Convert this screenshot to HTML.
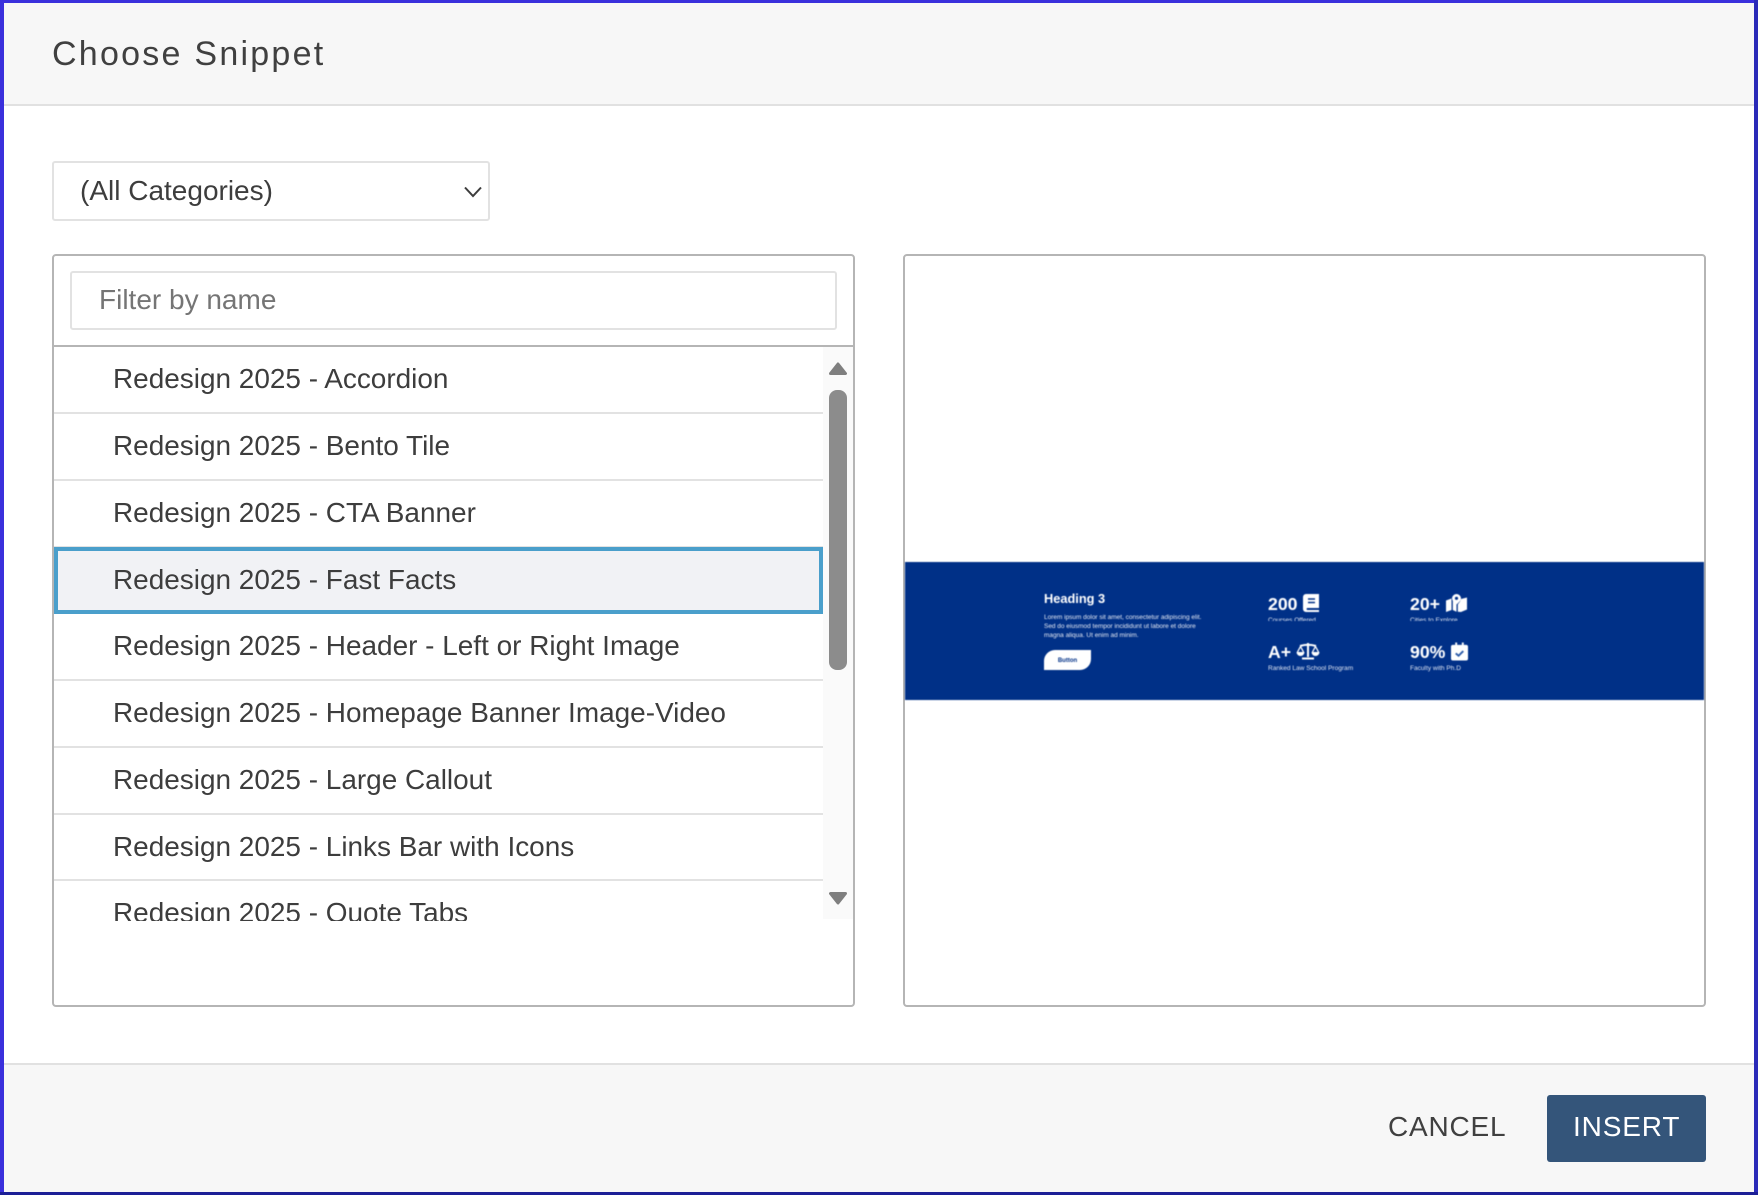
<!DOCTYPE html>
<html>
<head>
<meta charset="utf-8">
<style>
html,body{margin:0;padding:0;background:#fff}
#p{position:relative;width:1758px;height:1195px;overflow:hidden;background:#fff;font-family:"Liberation Sans",Arial,sans-serif;color:#3d3d3d}
#p div,#p span.a{position:absolute;box-sizing:border-box}
.t{white-space:nowrap}
.row{left:54px;width:769px;height:67px;line-height:64px;padding-left:59px;font-size:27.95px;border-bottom:2px solid #e2e2e2;white-space:nowrap}
.s{color:#fff;white-space:nowrap}
.b{font-weight:700;font-size:17.7px;line-height:20px}
.m{font-size:6.55px;line-height:10px;color:#dfe6f3}
</style>
</head>
<body>
<div id="p">
  <div style="left:0;top:0;width:1758px;height:106px;background:#f7f7f7;border-bottom:2px solid #e1e1e1"></div>
  <div class="t" style="left:52px;top:33px;font-size:34px;line-height:42px;letter-spacing:2.25px;color:#404040">Choose Snippet</div>

  <div style="left:52px;top:161px;width:438px;height:60px;border:2px solid #e2e2e2;border-radius:3px;background:#fff"></div>
  <div class="t" style="left:80px;top:174px;font-size:28px;line-height:34px">(All Categories)</div>
  <svg style="position:absolute;left:463px;top:185px" width="20" height="14" viewBox="0 0 20 14"><path d="M2 2.500 L10 11 L18 2.500" fill="none" stroke="#3d3d3d" stroke-width="2"/></svg>

  <!-- left panel -->
  <div style="left:52px;top:254px;width:803px;height:753px;border:2px solid #b5b5b5;border-radius:4px;background:#fff"></div>
  <div style="left:70px;top:271px;width:767px;height:59px;border:2px solid #e2e2e2;border-radius:3px;background:#fff"></div>
  <div class="t" style="left:99px;top:283px;font-size:28px;line-height:34px;color:#757575">Filter by name</div>
  <div style="left:54px;top:345px;width:799px;height:2px;background:#b5b5b5"></div>

  <div style="left:54px;top:347px;width:799px;height:574px;overflow:hidden">
    <div style="left:0;top:0;width:799px;height:574px">
      <div class="row" style="left:0;top:0">Redesign 2025 - Accordion</div>
      <div class="row" style="left:0;top:66.8px">Redesign 2025 - Bento Tile</div>
      <div class="row" style="left:0;top:133.6px">Redesign 2025 - CTA Banner</div>
      <div class="row" style="left:0;top:200px;border:4px solid #4a9fcb;background:#f1f2f5;padding-left:55px;line-height:58px;height:67px">Redesign 2025 - Fast Facts</div>
      <div class="row" style="left:0;top:267.2px">Redesign 2025 - Header - Left or Right Image</div>
      <div class="row" style="left:0;top:334px">Redesign 2025 - Homepage Banner Image-Video</div>
      <div class="row" style="left:0;top:400.8px">Redesign 2025 - Large Callout</div>
      <div class="row" style="left:0;top:467.6px;height:66px;line-height:63px">Redesign 2025 - Links Bar with Icons</div>
      <div class="row" style="left:0;top:533.6px">Redesign 2025 - Quote Tabs</div>
    </div>
    <div style="left:769px;top:0;width:30px;height:572px;background:#fafafa"></div>
    <svg style="position:absolute;left:775px;top:14px" width="18" height="15" viewBox="0 0 18 15"><path d="M9 3 L16.500 12.500 L1.500 12.500 Z" fill="#7f7f7f" stroke="#7f7f7f" stroke-width="3" stroke-linejoin="round"/></svg>
    <div style="left:775px;top:43px;width:18px;height:280px;background:#8c8c8c;border-radius:8px"></div>
    <svg style="position:absolute;left:775px;top:544px" width="18" height="15" viewBox="0 0 18 15"><path d="M1.500 2.500 L16.500 2.500 L9 12 Z" fill="#7f7f7f" stroke="#7f7f7f" stroke-width="3" stroke-linejoin="round"/></svg>
  </div>

  <!-- right panel -->
  <div style="left:903px;top:254px;width:803px;height:753px;border:2px solid #b5b5b5;border-radius:4px;background:#fff"></div>
  <div style="left:905px;top:562px;width:799px;height:138px;background:#003087;overflow:hidden;filter:blur(.45px)">
    <div class="s" style="left:139px;top:29px;font-weight:700;font-size:12.8px;line-height:16px">Heading 3</div>
    <div class="s" style="left:139px;top:50.500px;font-size:6.47px;line-height:9.4px;color:#e6ebf5">Lorem ipsum dolor sit amet, consectetur adipiscing elit.<br>Sed do eiusmod tempor incididunt ut labore et dolore<br>magna aliqua. Ut enim ad minim.</div>
    <div style="left:139px;top:88px;width:47px;height:20px;background:#fff;border-radius:11px 0 11px 0"></div>
    <div class="t" style="left:139px;top:89px;width:47px;height:20px;line-height:20px;text-align:center;font-size:6px;font-weight:700;color:#003087">Button</div>

    <div class="s b" style="left:363px;top:32px">200</div>
    <svg style="position:absolute;left:398px;top:32px" width="17" height="18" viewBox="0 0 17 18"><path d="M3 0H16V14H4a1.500 1.500 0 0 0 0 2H16V18H3A3 3 0 0 1 0 15V3A3 3 0 0 1 3 0Z" fill="#fff"/><path d="M5 5H12M5 8.500H12" stroke="#003087" stroke-width="1.400"/></svg>
    <div style="left:363px;top:50px;width:120px;height:9px;overflow:hidden"><div class="s m" style="left:0;top:3.600px">Courses Offered</div></div>

    <div class="s b" style="left:505px;top:32px">20+</div>
    <svg style="position:absolute;left:541px;top:32px" width="21" height="18" viewBox="0 0 21 18"><path d="M0 6.500L5.500 4.500V16L0 18ZM6.800 4.800L8 7.500L10.500 10.500V17.800L6.800 16ZM11.800 10.500L14 7.500L15 5L21 3.500V15.500L15 18L11.800 17.800Z" fill="#fff"/><path d="M10.500 0A4.500 4.500 0 0 1 15 4.500C15 6.500 12.500 8.800 10.500 10.500C8.500 8.800 6 6.500 6 4.500A4.500 4.500 0 0 1 10.500 0Z" fill="#fff"/><circle cx="10.500" cy="4.300" r="1.600" fill="#003087"/></svg>
    <div style="left:505px;top:50px;width:120px;height:9px;overflow:hidden"><div class="s m" style="left:0;top:3.600px">Cities to Explore</div></div>

    <div class="s b" style="left:363px;top:80px">A+</div>
    <svg style="position:absolute;left:391px;top:80px" width="24" height="18" viewBox="0 0 24 18"><path d="M4 4Q12 1.500 20 4M12 1V15M6 16.500H18" stroke="#fff" stroke-width="2" fill="none"/><path d="M1.500 10L4.500 4.500L7.500 10M16.500 10L19.500 4.500L22.500 10" stroke="#fff" stroke-width="1.300" fill="none"/><path d="M.5 10H8.500A4 4 0 0 1 .5 10ZM15.500 10H23.500A4 4 0 0 1 15.500 10Z" fill="#fff"/></svg>
    <div class="s m" style="left:363px;top:102px">Ranked Law School Program</div>

    <div class="s b" style="left:505px;top:80px">90%</div>
    <svg style="position:absolute;left:546px;top:80px" width="17" height="19" viewBox="0 0 18 19"><path d="M2 2.500H4.500V0H6.500V2.500H11.500V0H13.500V2.500H16A2 2 0 0 1 18 4.500V17A2 2 0 0 1 16 19H2A2 2 0 0 1 0 17V4.500A2 2 0 0 1 2 2.500Z" fill="#fff"/><path d="M5 11.500L8 14L13 9" fill="none" stroke="#2a5aa8" stroke-width="2"/></svg>
    <div class="s m" style="left:505px;top:102px">Faculty with Ph.D</div>
  </div>

  <!-- footer -->
  <div style="left:0;top:1063px;width:1758px;height:132px;background:#f7f7f7;border-top:2px solid #e1e1e1"></div>
  <div class="t" style="left:1388px;top:1110px;font-size:28px;line-height:34px;letter-spacing:.8px;color:#404040">CANCEL</div>
  <div style="left:1547px;top:1095px;width:159px;height:67px;background:#34557a;border-radius:3px"></div>
  <div class="t" style="left:1573px;top:1110px;font-size:28px;line-height:34px;letter-spacing:.85px;color:#fff">INSERT</div>

  <!-- outer frame -->
  <div style="left:0;top:0;width:1758px;height:3px;background:#3a30dc"></div>
  <div style="left:0;top:0;width:4px;height:1195px;background:#3a30dc"></div>
  <div style="left:1754px;top:0;width:4px;height:1195px;background:#2a2ab8"></div>
  <div style="left:0;top:1192px;width:1758px;height:3px;background:#1c1f96"></div>
</div>
</body>
</html>
